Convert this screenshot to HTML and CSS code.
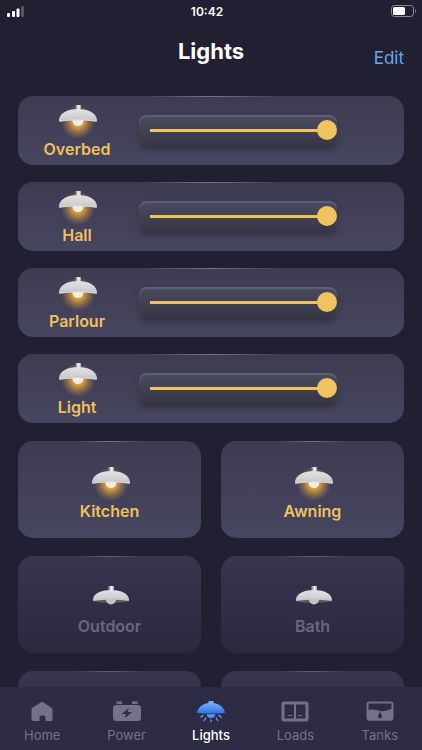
FILE: index.html
```
<!DOCTYPE html>
<html lang="en">
<head>
<meta charset="utf-8">
<meta name="viewport" content="width=device-width, initial-scale=1">
<title>Lights</title>
<link rel="stylesheet" href="styles.css">
</head>
<body>
<svg class="defs" aria-hidden="true">
  <defs>
    <linearGradient id="shade" x1="0" y1="0" x2="0" y2="1"><stop offset="0" stop-color="#e2e2e4"/><stop offset=".6" stop-color="#d2d2d4"/><stop offset="1" stop-color="#c2c2c4"/></linearGradient>
    <linearGradient id="stem" x1="0" y1="0" x2="1" y2="0"><stop offset="0" stop-color="#555460"/><stop offset=".35" stop-color="#b9b9bc"/><stop offset=".6" stop-color="#ffffff"/><stop offset="1" stop-color="#9a9aa0"/></linearGradient>
    <radialGradient id="glow"><stop offset="0" stop-color="#f0ae3c"/><stop offset=".35" stop-color="#e0a23f" stop-opacity=".9"/><stop offset=".7" stop-color="#c8923f" stop-opacity=".4"/><stop offset="1" stop-color="#c08c40" stop-opacity="0"/></radialGradient>
    <linearGradient id="blue" x1="0" y1="0" x2="0" y2="1"><stop offset="0" stop-color="#86b7fb"/><stop offset="1" stop-color="#2f71ee"/></linearGradient>
  </defs>
  <symbol id="lamp-on" viewBox="0 0 42 36">
    <path d="M3 17H41V36H3Z" fill="none"/>
    <circle cx="22" cy="19" r="17" fill="url(#glow)"/>
    <rect x="19" y="2" width="6" height="5" fill="url(#stem)"/>
    <circle cx="22" cy="17.500" r="5.500" fill="#f1ede4"/>
    <path d="M3 18.500V16.500C4 10 12 6 22 6S40 10 41 16.500V18.500Q32 17 22 17T3 18.500Z" fill="url(#shade)"/>
    <path d="M3.500 18.300Q12 16.800 22 16.800T40.500 18.300" fill="none" stroke="#e9e6de" stroke-width=".8"/>
  </symbol>
  <symbol id="lamp-off" viewBox="0 0 42 36">
    <path d="M4 20Q22 16 40 20L39 21.500Q22 24 5 21.500Z" fill="#5d5d62"/>
    <rect x="19" y="6" width="6" height="5" fill="url(#stem)"/>
    <circle cx="22" cy="19.500" r="5" fill="#c4c4c8"/>
    <path d="M4 21V19C5 13 13 10 22 10S39 13 40 19V21Q32 19.500 22 19.500T4 21Z" fill="url(#shade)"/>
  </symbol>
</svg>

<div class="status">
  <svg class="signal" viewBox="0 0 18 12" role="img" aria-label="Signal"><rect x="0" y="8" width="3" height="4" rx="1" fill="#fff"/><rect x="5" y="6" width="3" height="6" rx="1" fill="#fff"/><rect x="9.500" y="3.500" width="3" height="8.500" rx="1" fill="#fff"/><rect x="14" y="1" width="3" height="11" rx="1" fill="#55545f"/></svg>
  <time>10:42</time>
  <svg class="battery" viewBox="0 0 26 12" role="img" aria-label="Battery"><rect x=".5" y=".5" width="22" height="11" rx="3" fill="none" stroke="#8b8a94"/><rect x="2" y="2" width="12" height="8" rx="1.500" fill="#fff"/><path d="M24 4q2 2 0 4z" fill="#8b8a94"/></svg>
</div>

<header class="header">
  <h1>Lights</h1>
  <button class="edit" type="button">Edit</button>
</header>

<main class="content">
  <section class="dimmers">
    <div class="card dimmer">
      <label for="overbed"><svg class="lamp"><use href="#lamp-on"/></svg>Overbed</label>
      <div class="slot"><input id="overbed" type="range" value="100"></div>
    </div>
    <div class="card dimmer">
      <label for="hall"><svg class="lamp"><use href="#lamp-on"/></svg>Hall</label>
      <div class="slot"><input id="hall" type="range" value="100"></div>
    </div>
    <div class="card dimmer">
      <label for="parlour"><svg class="lamp"><use href="#lamp-on"/></svg>Parlour</label>
      <div class="slot"><input id="parlour" type="range" value="100"></div>
    </div>
    <div class="card dimmer">
      <label for="light"><svg class="lamp"><use href="#lamp-on"/></svg>Light</label>
      <div class="slot"><input id="light" type="range" value="100"></div>
    </div>
  </section>
  <section class="switches">
    <button class="card switch" type="button" aria-pressed="true"><svg class="lamp"><use href="#lamp-on"/></svg>Kitchen</button>
    <button class="card switch" type="button" aria-pressed="true"><svg class="lamp"><use href="#lamp-on"/></svg>Awning</button>
    <button class="card switch off" type="button" aria-pressed="false"><svg class="lamp"><use href="#lamp-off"/></svg>Outdoor</button>
    <button class="card switch off" type="button" aria-pressed="false"><svg class="lamp"><use href="#lamp-off"/></svg>Bath</button>
    <div class="card switch off"></div>
    <div class="card switch off"></div>
  </section>
</main>

<nav class="tabs">
  <a href="#home"><svg viewBox="0 0 30 22"><path d="M4.500 8.500Q4.500 7.500 5.500 6.700L13.500 1.500Q15 .7 16.500 1.500L24.500 6.700Q25.500 7.500 25.500 8.500V18.500Q25.500 20 24 20H18.500V16.500Q18.500 14.500 16.500 14.500H14.500Q12.500 14.500 12.500 16.500V20H6Q4.500 20 4.500 18.500Z" fill="currentColor"/></svg>Home</a>
  <a href="#power"><svg viewBox="0 0 30 22"><path d="M4.500 .5H10V3H4.500ZM20 .5H25.500V3H20Z" fill="currentColor"/><rect x="1" y="4" width="28" height="16" rx="3.500" fill="currentColor"/><path d="M17 7L9.500 13H14L13 17L20 11H15.500Z" fill="#2d2b45"/></svg>Power</a>
  <a class="active" href="#lights" aria-current="page"><svg viewBox="0 0 30 22"><path d="M12.500 0H17.500V2C24 3 28.500 7 29 12Q15 13 1 12C1.500 7 6 3 12.500 2Z" fill="url(#blue)"/><path d="M10.500 13.300H19.500Q19 17 15 17T10.500 13.300Z" fill="#5b93f5"/><path d="M7.500 14L4.500 16.500M10 16.500L8 20M22.500 14L25.500 16.500M20 16.500L22 20M15 18.500V21" stroke="#68a0f7" stroke-width="1.300" fill="none"/></svg>Lights</a>
  <a href="#loads"><svg viewBox="0 0 30 22"><rect x="3" y="2" width="24" height="17" rx="1" fill="none" stroke="currentColor" stroke-width="3"/><path d="M15 2V19" stroke="currentColor" stroke-width="2"/><path d="M8 14.500H12M18 14.500H22" stroke="currentColor"/></svg>Loads</a>
  <a href="#tanks"><svg viewBox="0 0 30 22"><rect x="2.500" y="1.500" width="25" height="17" rx="2" fill="none" stroke="currentColor" stroke-width="2"/><path d="M2 9.500C7 7.500 11 9 15 10S22 9 28 7.500V18Q28 19.500 26 19.500H4Q2 19.500 2 18Z" fill="currentColor"/><path d="M15 11C13.500 13.500 13 14.500 13 15.500A2 2 0 0 0 17 15.500C17 14.500 16.500 13.500 15 11Z" fill="#2d2b45"/></svg>Tanks</a>
</nav>
</body>
</html>
```
FILE: styles.css
```
* { box-sizing: border-box; }

body {
  margin: 0;
  height: 100vh;
  display: flex;
  flex-direction: column;
  background: #211f32;
  color: #fff;
  font-family: Inter, "Liberation Sans", sans-serif;
}

button {
  border: 0;
  padding: 0;
  background: none;
  font: inherit;
}

.defs {
  position: absolute;
  width: 0;
  height: 0;
}

.status {
  display: grid;
  grid-template-columns: 1fr auto 1fr;
  align-items: center;
  height: 22px;
  padding: 0 5px 0 7px;
  font-size: 12px;
  font-weight: 600;
}

.status time { padding-right: 10px; }

.signal { width: 18px; height: 12px; }
.battery { width: 26px; height: 12px; justify-self: end; }

.header {
  display: grid;
  grid-template-columns: 1fr auto 1fr;
  height: 74px;
  padding: 16px 18px 0;
}

h1 {
  grid-column: 2;
  margin: 0;
  font-size: 22px;
  line-height: 27px;
  font-weight: 700;
}

.edit {
  justify-self: end;
  align-self: start;
  padding-top: 8px;
  color: #69a5ef;
  font-size: 17px;
  line-height: 24px;
}

.content {
  flex: 1;
  min-height: 0;
  overflow-y: auto;
  scrollbar-width: none;
  padding: 0 18px;
}

.dimmers {
  display: grid;
  gap: 17px;
  margin-bottom: 18px;
}

.switches {
  display: grid;
  grid-template-columns: 1fr 1fr;
  gap: 18px 20px;
}

.card {
  border-radius: 15px;
  background:
    linear-gradient(90deg, transparent 32%, #77758b 50%, transparent 68%) top / 100% 1px no-repeat,
    linear-gradient(#3e3b51, #474660);
  color: #f0c15b;
  font-size: 16px;
  line-height: 20px;
  font-weight: 600;
}

.lamp { width: 42px; height: 36px; }

.dimmer {
  display: grid;
  grid-template-columns: 121px 1fr;
  align-items: start;
  height: 69px;
  padding-right: 67px;
}

.dimmer label {
  display: flex;
  flex-direction: column;
  align-items: center;
  padding: 7px 3px 0 0;
}

.slot {
  height: 32px;
  margin-top: 19px;
  padding-left: 11px;
  border-radius: 8px;
  background: linear-gradient(#4a4c5e, #363546);
  box-shadow: inset 0 2px 1px #5f607a, 0 3px 5px #353446;
}

.slot input {
  display: block;
  appearance: none;
  width: 100%;
  height: 30px;
  margin: 0;
  background: linear-gradient(#eec25f, #eec25f) left center / calc(100% - 10px) 3px no-repeat;
}

.slot input::-webkit-slider-thumb {
  appearance: none;
  width: 20px;
  height: 20px;
  border-radius: 50%;
  background: #efc35f;
}

.switch {
  display: flex;
  flex-direction: column;
  align-items: center;
  height: 97px;
  padding-top: 24px;
}

.switch.off {
  background:
    linear-gradient(90deg, transparent 32%, #65637c 50%, transparent 68%) top / 100% 1px no-repeat,
    linear-gradient(#38354f, #2a2940);
  color: #6a687c;
}

.tabs {
  display: grid;
  grid-template-columns: repeat(5, 1fr);
  height: 63px;
  background: #2d2b45;
}

.tabs a {
  display: flex;
  flex-direction: column;
  align-items: center;
  gap: 3px;
  padding-top: 14px;
  color: #747288;
  font-size: 13px;
  line-height: 18px;
  text-decoration: none;
}

.tabs svg { width: 30px; height: 22px; }

.tabs .active { color: #fff; font-weight: 500; }
```
